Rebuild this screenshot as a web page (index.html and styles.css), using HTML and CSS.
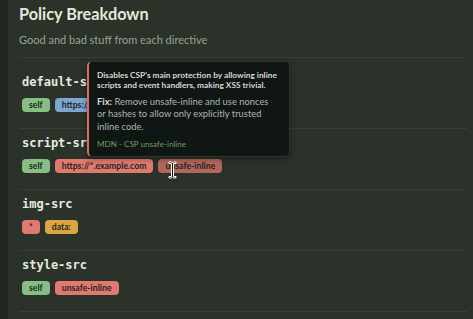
FILE: index.html
```html
<!DOCTYPE html>
<html lang="en">
<head>
  <meta charset="UTF-8">
  <title>Policy Breakdown</title>
  <link rel="stylesheet" href="styles.css">
</head>
<body>
  <div class="panel">
    <div class="header">
      <h2 class="title">Policy Breakdown</h2>
      <p class="subtitle">Good and bad stuff from each directive</p>
    </div>
    <ul class="directives">
      <li class="directive">
        <div class="name">default-src</div>
        <div class="badges">
          <span class="badge good">self</span>
          <span class="badge info">https://*.example.com</span>
        </div>
      </li>
      <li class="directive">
        <div class="name">script-src</div>
        <div class="badges">
          <span class="badge good">self</span>
          <span class="badge bad">https://*.example.com</span>
          <span class="badge bad hover">unsafe-inline</span>
        </div>
      </li>
      <li class="directive">
        <div class="name">img-src</div>
        <div class="badges">
          <span class="badge bad">*</span>
          <span class="badge warn">data:</span>
        </div>
      </li>
      <li class="directive">
        <div class="name">style-src</div>
        <div class="badges">
          <span class="badge good">self</span>
          <span class="badge bad">unsafe-inline</span>
        </div>
      </li>
    </ul>
    <div class="tooltip">
      <p class="tip-why">Disables CSP's main protection by allowing inline scripts and event handlers, making XSS trivial.</p>
      <p class="tip-fix"><b>Fix:</b> Remove unsafe-inline and use nonces or hashes to allow only explicitly trusted inline code.</p>
      <a class="tip-link" href="#">MDN - CSP unsafe-inline</a>
    </div>
    <svg class="cursor" width="9" height="18" viewBox="0 0 9 18">
      <path d="M1 1h2.5l1 1 1-1H8v1.5H5.5v13H8V17H5.5l-1-1-1 1H1v-1.5h2.5v-13H1z" fill="#111" stroke="#fff" stroke-width="1"/>
    </svg>
  </div>
</body>
</html>
```

FILE: styles.css
```css
body {
  margin: 0;
  background: #20271f;
  font-family: Lato, "Noto Sans", sans-serif;
  height: 319px;
  overflow: hidden;
}
.panel {
  position: relative;
  margin-left: 8px;
  width: 448px;
  height: 319px;
  padding: 0 10px 0 11px;
  background: #2a3229;
  border-right: 1px solid #313a30;
}
.header {
  padding-top: 1px;
  border-bottom: 1px solid #374034;
  height: 56px;
}
.title {
  margin: 2px 0 0;
  font-size: 16.3px;
  line-height: 22px;
  font-weight: 700;
  color: #e3eadb;
}
.subtitle {
  margin: 8px 0 0;
  font-size: 11px;
  line-height: 14px;
  color: #98a394;
}
.directives {
  list-style: none;
  margin: 0;
  padding: 10px 0 0;
}
.directive {
  padding: 7px 0 16px 3px;
  border-bottom: 1px solid #374034;
}
.name {
  font-family: "DejaVu Sans Mono", monospace;
  font-weight: 700;
  font-size: 12px;
  line-height: 15px;
  color: #e6ebe0;
  margin-bottom: 8px;
}
.badges {
  display: flex;
  gap: 5px;
}
.badge {
  height: 14px;
  line-height: 14px;
  padding: 0 7px;
  border-radius: 4px;
  font-size: 8.7px;
  font-weight: 700;
  color: #1e261d;
}
.good { background: #86bf83; }
.bad { background: #e07a6e; }
.info { background: #7fa5d5; }
.warn { background: #dba542; }
.bad.hover { background: #b4665c; }
.tooltip {
  position: absolute;
  left: 79px;
  top: 61px;
  width: 181px;
  height: 86px;
  padding: 8px 11px 0 8px;
  background: #0f1613;
  border: 1px solid #2e372d;
  border-left: 2px solid #db6c62;
  border-radius: 5px;
  box-shadow: 0 2px 6px rgba(0, 0, 0, 0.35);
}
.tip-why {
  margin: 0;
  font-size: 8.3px;
  line-height: 10px;
  font-weight: 700;
  color: #d6dbd0;
}
.tip-fix {
  margin: 6px 0 0;
  font-size: 9.4px;
  line-height: 12.3px;
  color: #aeb6ab;
}
.tip-fix b {
  font-weight: 700;
  color: #d8ddd2;
}
.tip-link {
  display: block;
  margin-top: 6px;
  font-size: 8.1px;
  line-height: 10px;
  color: #6f9d63;
  text-decoration: none;
}
.cursor {
  position: absolute;
  left: 160px;
  top: 161px;
}
```
